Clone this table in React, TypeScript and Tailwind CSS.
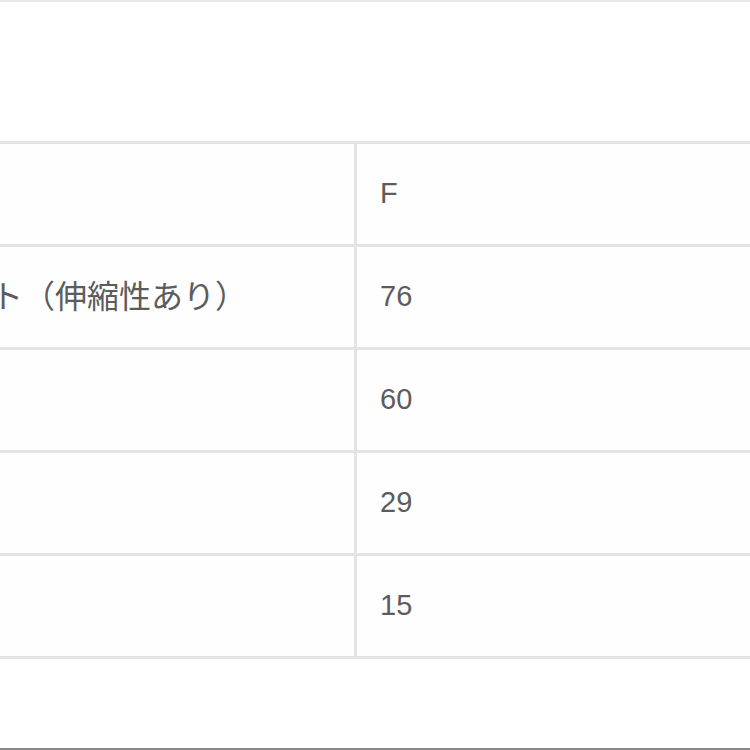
const rows = [
  { label: '', value: 'F' },
  { label: 'ウエスト（伸縮性あり）', value: '76' },
  { label: '', value: '60' },
  { label: '', value: '29' },
  { label: '', value: '15' },
];

export default function App() {
  return (
    <div
      className="h-[750px] w-[750px] overflow-hidden bg-white border-t-2 border-[#e8e8e8] border-b-2 border-b-[#8a8a8a] text-[#5c5c5c]"
      style={{ fontFamily: '"Liberation Sans", "Noto Sans CJK JP", sans-serif' }}
    >
      {/* size table, left part cut off */}
      <div className="mt-[139px] -ml-[128px] w-[878px] border-t-[3px] border-[#e4e4e4]">
        {rows.map((row) => (
          <div key={row.value} className="flex h-[103px] border-b-[3px] border-[#e4e4e4] bg-[#fefefe]">
            <div className="flex w-[485px] shrink-0 items-center border-r-[3px] border-[#e4e4e4] pl-[23px] text-[32px] whitespace-nowrap">
              {row.label}
            </div>
            <div className="flex flex-1 items-center pl-[23px] text-[29px]">{row.value}</div>
          </div>
        ))}
      </div>
    </div>
  );
}
